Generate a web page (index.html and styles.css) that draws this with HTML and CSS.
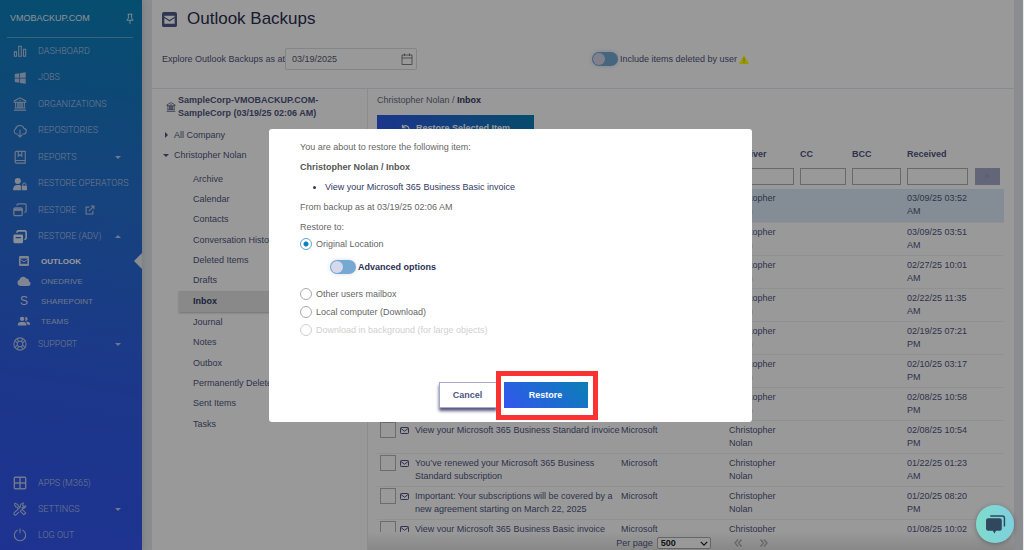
FILE: index.html
```html
<!DOCTYPE html>
<html lang="en">
<head>
<meta charset="utf-8">
<title>Outlook Backups</title>
<link rel="stylesheet" href="styles.css">
</head>
<body>
<svg class="defs" aria-hidden="true">
  <symbol id="bank" viewBox="0 0 16 16"><path d="M1.500 6V4.500L8 1l6.500 3.500V6zM3 6v6.500M5.500 6v6.500M10.500 6v6.500M13 6v6.500M7 6v6.500M9 6v6.500M2 12.500h12M1 15h14" fill="none" stroke="currentColor" stroke-width="1.200"/><circle cx="8" cy="4" r=".8" fill="currentColor"/></symbol>
  <symbol id="mail" viewBox="0 0 16 16"><path fill="currentColor" fill-rule="evenodd" d="M2 0h12a2 2 0 0 1 2 2v12a2 2 0 0 1-2 2H2a2 2 0 0 1-2-2V2a2 2 0 0 1 2-2zM2.500 6.500v6h11v-6L8 10zM2.500 4v1L8 8.500 13.500 5V4z"/></symbol>
  <symbol id="envelope" viewBox="0 0 18 14"><rect x="1" y="1" width="16" height="12" rx="1.500" fill="none" stroke="currentColor" stroke-width="2"/><path d="M2 3l7 5.500L16 3" fill="none" stroke="currentColor" stroke-width="2"/></symbol>
</svg>
<div class="app">
  <nav class="sidebar">
    <div class="brand"><span>VMOBACKUP.COM</span>
      <svg class="pin" viewBox="0 0 10 14"><path d="M2 1h6M3 1v5L1 8.500h8L7 6V1M5 8.500V13" fill="none" stroke="currentColor" stroke-width="1.100"/></svg>
    </div>
    <ul class="menu menu-main">
      <li><a href="#"><svg class="ico" viewBox="0 0 16 16"><path d="M1.500 9h2.500v5H1.500zM6.500 2.500H9.500V14h-3zM12 6h2.500v8H12z" fill="none" stroke="currentColor" stroke-width="1.200"/></svg><span>DASHBOARD</span></a></li>
      <li><a href="#"><svg class="ico" viewBox="0 0 16 16"><path fill="currentColor" d="M2 3.500l5-.8v5H2zM7.800 2.600L14.500 1.500v6.200H7.800zM2 8.500h5v5l-5-.8zM7.800 8.500h6.700v6.200l-6.700-1.100z"/></svg><span>JOBS</span></a></li>
      <li><a href="#"><svg class="ico"><use href="#bank"/></svg><span>ORGANIZATIONS</span></a></li>
      <li><a href="#"><svg class="ico" viewBox="0 0 16 16"><path d="M5.500 11.500H4A3.200 3.200 0 0 1 3 5.500 5 5 0 0 1 12.500 5 3.300 3.300 0 0 1 12.500 11.500H10.500M8 6.500V14.500M5.500 12.300L8 14.800l2.500-2.500" fill="none" stroke="currentColor" stroke-width="1.200"/></svg><span>REPOSITORIES</span></a></li>
      <li><a href="#"><svg class="ico" viewBox="0 0 16 16"><path d="M14 12V1.500H4A1.500 1.500 0 0 0 2.500 3v10.500A1.500 1.500 0 0 0 4 15h10v-3H4a1.500 1.500 0 0 0-1.500 1.500M6 1.500V7l2-1.500L10 7V1.500" fill="none" stroke="currentColor" stroke-width="1.300"/></svg><span>REPORTS</span><i class="caret"></i></a></li>
      <li><a href="#"><svg class="ico people" viewBox="0 0 16 16"><circle cx="5.500" cy="4.500" r="3.500" fill="currentColor"/><path fill="currentColor" d="M0 15c0-4 2-6 5-6h3l1 1v5z"/><rect x="10" y="10" width="6" height="5" rx=".6" fill="currentColor"/><path d="M11.300 10V8.500a1.700 1.700 0 0 1 3.400 0V10" fill="none" stroke="currentColor" stroke-width="1.100"/></svg><span>RESTORE OPERATORS</span></a></li>
      <li><a href="#"><svg class="ico" viewBox="0 0 16 16"><rect x="1" y="5.500" width="9.500" height="9" rx="1.500" fill="none" stroke="currentColor" stroke-width="1.400"/><path d="M1 6h10v3H1z" fill="currentColor"/><path d="M4.500 3V2.500A1.500 1.500 0 0 1 6 1h7.500A1.500 1.500 0 0 1 15 2.500V9a1.500 1.500 0 0 1-1.500 1.500H13" fill="none" stroke="currentColor" stroke-width="1.400"/></svg><span>RESTORE</span><svg class="ext" viewBox="0 0 14 14"><path d="M6 3H1.500v9.500H11V8M8 1.500h4.500V6M12.500 1.500L5.500 8.500" fill="none" stroke="currentColor" stroke-width="1.500"/></svg></a></li>
      <li><a href="#"><svg class="ico bright" viewBox="0 0 16 16"><path fill="currentColor" fill-rule="evenodd" d="M2 5h8a1.500 1.500 0 0 1 1.500 1.500v7A1.500 1.500 0 0 1 10 15H2A1.500 1.500 0 0 1 .5 13.500v-7A1.500 1.500 0 0 1 2 5zM3 8v1.500h6V8z"/><path d="M4.500 3V2.500A1.500 1.500 0 0 1 6 1h7.500A1.500 1.500 0 0 1 15 2.500V9a1.500 1.500 0 0 1-1.500 1.500H13" fill="none" stroke="currentColor" stroke-width="1.800"/></svg><span>RESTORE (ADV)</span><i class="caret up"></i></a></li>
    </ul>
    <ul class="menu menu-sub">
      <li class="active"><a href="#"><svg class="sub"><use href="#mail"/></svg><span>OUTLOOK</span></a></li>
      <li><a href="#"><svg class="sub wide" viewBox="0 0 20 14"><path fill="currentColor" d="M5 14a4.500 4.500 0 0 1-1.500-8.700A5.500 5.500 0 0 1 13.500 3.500 3.500 3.500 0 0 1 17 7.200 3.500 3.500 0 0 1 16.500 14z"/></svg><span>ONEDRIVE</span></a></li>
      <li><a href="#"><b class="sub letter">S</b><span>SHAREPOINT</span></a></li>
      <li><a href="#"><svg class="sub wide" viewBox="0 0 20 16"><circle cx="7" cy="4.500" r="3.500" fill="currentColor"/><path fill="currentColor" d="M0 15c0-4 2-5.500 4.500-5.500h5C12 9.500 14 11 14 15zM11.500 7.200a4.500 4.500 0 0 0 0-5.400 3 3 0 1 1 0 5.400zM12.500 9H15c3 0 5 1.500 5 5h-4.700c-.2-2.500-1.300-4-2.800-5z"/></svg><span>TEAMS</span></a></li>
    </ul>
    <ul class="menu">
      <li><a href="#"><svg class="ico" viewBox="0 0 16 16"><g fill="none" stroke="currentColor" stroke-width="1.200"><circle cx="8" cy="8" r="7"/><circle cx="8" cy="8" r="3.200"/><path d="M2.500 4.500L5 6.800M4.500 2.500L6.800 5M11.500 2.500L9.200 5M13.500 4.500L11 6.800M2.500 11.500L5 9.200M4.500 13.500L6.800 11M11.500 13.500L9.200 11M13.500 11.500L11 9.200"/></g></svg><span>SUPPORT</span><i class="caret"></i></a></li>
    </ul>
    <ul class="menu menu-foot">
      <li><a href="#"><svg class="ico" viewBox="0 0 16 16"><path d="M2.500 1.500h11a1 1 0 0 1 1 1v11a1 1 0 0 1-1 1h-11a1 1 0 0 1-1-1v-11a1 1 0 0 1 1-1zM8 1.500v13M1.500 8h13" fill="none" stroke="currentColor" stroke-width="1.600"/></svg><span>APPS (M365)</span></a></li>
      <li><a href="#"><svg class="ico" viewBox="0 0 16 16"><g fill="none" stroke="currentColor" stroke-width="1.200"><path d="M1.500 2.500l1-1 3 1.500.5 1.500 2 2M9.500 9l1-.5 4 4-2 2.200-4-4 .5-1zM10 6.500L14.500 4.500 12.500 5 11 3.500 11.800 1.200A3.500 3.500 0 0 0 8.500 5.500L1.500 12.200a1.600 1.600 0 0 0 2.300 2.300L7 11.300M10 6.500l1 .8a3.500 3.500 0 0 0 3.700-3M1.500 2.500L3 5.500l1.500.5 2 2"/></g></svg><span>SETTINGS</span><i class="caret"></i></a></li>
      <li><a href="#"><svg class="ico" viewBox="0 0 16 16"><path d="M5.200 2.200a6.500 6.500 0 1 0 5.600 0M8 .5v5.500" fill="none" stroke="currentColor" stroke-width="1.200"/></svg><span>LOG OUT</span></a></li>
    </ul>
  </nav>

  <main class="main">
    <header class="title"><svg><use href="#mail"/></svg><h1>Outlook Backups</h1></header>
    <div class="toolbar">
      <label for="asat">Explore Outlook Backups as at</label>
      <span class="datebox"><input id="asat" type="text" value="03/19/2025"><svg viewBox="0 0 12 12"><path d="M1 2h10v9.500H1zM1 5h10M3.500 .5V3M8.500 .5V3" fill="none" stroke="currentColor" stroke-width=".8"/></svg></span>
      <label class="switch-label include"><input class="switch" type="checkbox">Include items deleted by user
        <svg class="warn" viewBox="0 0 12 11"><path fill="#ffff00" d="M6 0l6 11H0z"/><path d="M6 3.500v4M6 8.500v1.300" stroke="#a9a96a" stroke-width="1.200"/></svg></label>
    </div>
    <div class="columns">
      <aside class="tree">
        <div class="root"><svg><use href="#bank"/></svg><b>SampleCorp-VMOBACKUP.COM-SampleCorp (03/19/25 02:06 AM)</b></div>
        <div class="node"><i class="caret right"></i>All Company</div>
        <div class="node"><i class="caret"></i>Christopher Nolan</div>
        <ul>
          <li>Archive</li><li>Calendar</li><li>Contacts</li><li>Conversation History</li><li>Deleted Items</li><li>Drafts</li><li class="selected">Inbox</li><li>Journal</li><li>Notes</li><li>Outbox</li><li>Permanently Deleted</li><li>Sent Items</li><li>Tasks</li>
        </ul>
      </aside>
      <section class="content">
        <div class="crumb">Christopher Nolan / <b>Inbox</b></div>
        <button class="primary restore-selected" type="button"><svg viewBox="0 0 12 12"><path d="M2 1v4h4M2 5a4.500 4.500 0 1 1 1 5" fill="none" stroke="currentColor" stroke-width="1.600"/></svg>Restore Selected Item</button>
        <div class="list">
          <table>
            <colgroup><col class="c-check"><col class="c-icon"><col><col class="c-sender"><col class="c-receiver"><col class="c-cc"><col class="c-bcc"><col class="c-received"><col class="c-clear"></colgroup>
            <thead>
              <tr><th></th><th></th><th>Subject</th><th>Sender</th><th>Receiver</th><th>CC</th><th>BCC</th><th>Received</th><th></th></tr>
              <tr class="filters"><td></td><td></td><td><input type="text" aria-label="Subject"></td><td><input type="text" aria-label="Sender"></td><td><input type="text" aria-label="Receiver"></td><td><input type="text" aria-label="CC"></td><td><input type="text" aria-label="BCC"></td><td><input type="text" aria-label="Received"></td><td><button class="clear" type="button">×</button></td></tr>
            </thead>
            <tbody>
              <tr class="picked"><td><input type="checkbox" aria-label="Select" checked></td><td><svg><use href="#envelope"/></svg></td><td>View your Microsoft 365 Business Basic invoice</td><td>Microsoft</td><td>Christopher Nolan</td><td></td><td></td><td>03/09/25 03:52 AM</td><td></td></tr>
              <tr><td><input type="checkbox" aria-label="Select"></td><td><svg><use href="#envelope"/></svg></td><td></td><td>Microsoft</td><td>Christopher Nolan</td><td></td><td></td><td>03/09/25 03:51 AM</td><td></td></tr>
              <tr><td><input type="checkbox" aria-label="Select"></td><td><svg><use href="#envelope"/></svg></td><td></td><td>Microsoft</td><td>Christopher Nolan</td><td></td><td></td><td>02/27/25 10:01 AM</td><td></td></tr>
              <tr><td><input type="checkbox" aria-label="Select"></td><td><svg><use href="#envelope"/></svg></td><td></td><td>Microsoft</td><td>Christopher Nolan</td><td></td><td></td><td>02/22/25 11:35 AM</td><td></td></tr>
              <tr><td><input type="checkbox" aria-label="Select"></td><td><svg><use href="#envelope"/></svg></td><td></td><td>Microsoft</td><td>Christopher Nolan</td><td></td><td></td><td>02/19/25 07:21 PM</td><td></td></tr>
              <tr><td><input type="checkbox" aria-label="Select"></td><td><svg><use href="#envelope"/></svg></td><td></td><td>Microsoft</td><td>Christopher Nolan</td><td></td><td></td><td>02/10/25 03:17 PM</td><td></td></tr>
              <tr><td><input type="checkbox" aria-label="Select"></td><td><svg><use href="#envelope"/></svg></td><td></td><td>Microsoft</td><td>Christopher Nolan</td><td></td><td></td><td>02/08/25 10:58 PM</td><td></td></tr>
              <tr><td><input type="checkbox" aria-label="Select"></td><td><svg><use href="#envelope"/></svg></td><td>View your Microsoft 365 Business Standard invoice</td><td>Microsoft</td><td>Christopher Nolan</td><td></td><td></td><td>02/08/25 10:54 PM</td><td></td></tr>
              <tr><td><input type="checkbox" aria-label="Select"></td><td><svg><use href="#envelope"/></svg></td><td>You’ve renewed your Microsoft 365 Business Standard subscription</td><td>Microsoft</td><td>Christopher Nolan</td><td></td><td></td><td>01/22/25 01:23 AM</td><td></td></tr>
              <tr><td><input type="checkbox" aria-label="Select"></td><td><svg><use href="#envelope"/></svg></td><td>Important: Your subscriptions will be covered by a new agreement starting on March 22, 2025</td><td>Microsoft</td><td>Christopher Nolan</td><td></td><td></td><td>01/20/25 08:20 PM</td><td></td></tr>
              <tr><td><input type="checkbox" aria-label="Select"></td><td><svg><use href="#envelope"/></svg></td><td>View your Microsoft 365 Business Basic invoice</td><td>Microsoft</td><td>Christopher</td><td></td><td></td><td>01/08/25 10:02</td><td></td></tr>
            </tbody>
          </table>
        </div>
        <div class="pager">
          <label for="per">Per page</label>
          <span class="selectbox"><select id="per"><option>500</option></select><svg viewBox="0 0 10 6"><path d="M1 1l4 4 4-4" fill="none" stroke="#222" stroke-width="1.600"/></svg></span>
          <svg class="page" viewBox="0 0 8 8"><path d="M4 .5L1 4l3 3.500M7.500 .5l-3 3.500 3 3.500" fill="none" stroke="currentColor" stroke-width="1.300"/></svg>
          <svg class="page" viewBox="0 0 8 8"><path d="M.5 .5l3 3.500-3 3.500M4 .5L7 4 4 7.500" fill="none" stroke="currentColor" stroke-width="1.300"/></svg>
        </div>
      </section>
    </div>
  </main>
</div>

<div class="overlay">
  <form class="dialog" role="dialog" aria-label="Restore item">
    <p>You are about to restore the following item:</p>
    <p><b>Christopher Nolan / Inbox</b></p>
    <ul><li>View your Microsoft 365 Business Basic invoice</li></ul>
    <p>From backup as at 03/19/25 02:06 AM</p>
    <p class="to">Restore to:</p>
    <label class="option"><input type="radio" name="to" checked>Original Location</label>
    <label class="switch-label advanced"><input class="switch" type="checkbox">Advanced options</label>
    <label class="option"><input type="radio" name="to">Other users mailbox</label>
    <label class="option"><input type="radio" name="to">Local computer (Download)</label>
    <label class="option off"><input type="radio" name="to" disabled>Download in background (for large objects)</label>
    <div class="actions"><button class="cancel" type="button">Cancel</button><span class="marked"><button class="primary" type="button">Restore</button></span></div>
  </form>
</div>
<button class="chat" type="button" aria-label="Chat"><svg viewBox="0 0 20 20"><path fill="#30475e" d="M3 4h11a2 2 0 0 1 2 2v8a2 2 0 0 1-2 2h-3.500L9 18.500 7.500 16H3a2 2 0 0 1-2-2V6a2 2 0 0 1 2-2z"/><path d="M5 1.800h11.500a2 2 0 0 1 2 2V12" fill="none" stroke="#30475e" stroke-width="1.400"/></svg></button>
</body>
</html>
```

FILE: styles.css
```css
* { box-sizing: border-box; }
body {
  margin: 0;
  height: 100vh;
  overflow: hidden;
  background: #fff;
  color: #4f5680;
  font: 9px/13px "Liberation Sans", Arial, sans-serif;
}
ul { list-style: none; margin: 0; padding: 0; }
p { margin: 0; }
a { color: inherit; text-decoration: none; }
button, input, select { font: inherit; color: inherit; margin: 0; }
svg { display: block; flex: none; }
.defs { position: absolute; width: 0; height: 0; }

.app { display: flex; height: 100vh; padding-right: 10px; background: #e8e9ef; }

/* sidebar */
.sidebar {
  display: flex;
  flex-direction: column;
  flex: none;
  width: 142px;
  background: linear-gradient(190deg, #0982b8 0%, #2570d0 35%, #305ce8 70%, #3256f2 100%);
  box-shadow: 0 0 8px #c4c6ce;
  color: #b9c8e8;
}
.brand {
  display: flex;
  justify-content: space-between;
  align-items: center;
  height: 38px;
  margin: 0 9px 0 7px;
  padding-left: 3px;
  border-bottom: 1px solid #5fa6d0;
  color: #e6eef8;
}
.pin { width: 8px; height: 12px; margin-right: -1px; }
.menu a { display: flex; align-items: center; height: 26px; padding-left: 13px; font-family: Roboto, sans-serif; font-weight: 300; }
.menu-main { display: flex; flex-direction: column; justify-content: space-between; height: 212px; }
.ico { width: 14px; height: 14px; margin-right: 11px; }
.people { color: #d5def0; }
.bright { color: #e6eef8; }
.ext { width: 10px; height: 10px; margin-left: 9px; }
.menu .caret { margin-left: auto; margin-right: 21px; }
.caret { border: 3px solid transparent; border-top-color: currentColor; border-bottom: 0; }
.caret.up { border-top: 0; border-bottom: 3px solid currentColor; }
.caret.right { margin: 0 1px 0 2px; border: 3px solid transparent; border-left-color: currentColor; border-right: 0; }
.menu-sub { padding: 1px 0 0; }
.menu-sub li { position: relative; }
.menu-sub a { height: 20px; padding-left: 17px; font-family: inherit; font-size: 8px; }
.sub { width: 10px; height: 10px; margin: 0 12px 0 2px; color: #d5def0; }
.sub.wide { width: 14px; margin: 0 10px 0 0; }
.letter { font-size: 12px; line-height: 10px; text-align: center; font-weight: 400; }
.menu-sub .active { color: #fff; }
.menu-sub .active a { font-weight: 700; }
.active::after {
  content: "";
  position: absolute;
  right: 0;
  top: 2px;
  border: 8px solid transparent;
  border-right-color: #e8e9ef;
  border-left: 0;
}
.menu-foot { margin-top: auto; padding-bottom: 2px; }

/* main */
.main { display: flex; flex-direction: column; flex: 1; min-width: 0; margin-left: 10px; background: #fff; }
.title { display: flex; align-items: center; gap: 10px; height: 38px; padding-left: 10px; color: #4f5a88; }
.title svg { width: 15px; height: 15px; }
h1 { margin: 0; font-size: 17px; font-weight: 400; line-height: 20px; color: #2a2d50; }
.toolbar {
  display: flex;
  align-items: center;
  height: 51px;
  padding: 0 0 8px 10px;
  border-bottom: 1px solid #e4e6ee;
}
.toolbar > label:first-child { width: 123px; white-space: nowrap; }
.datebox { position: relative; width: 132px; }
.datebox input { width: 100%; height: 22px; padding: 0 6px; border: 1px solid #dcdce4; border-radius: 2px; background: #fff; color: #555a70; }
.datebox svg { position: absolute; right: 4px; top: 5px; width: 12px; height: 12px; color: #666; }
.switch-label { display: flex; align-items: center; gap: 2px; }
.include { margin-left: 175px; }
.warn { width: 10px; height: 9px; }
.switch {
  appearance: none;
  width: 26px;
  height: 14px;
  padding: 1px;
  border-radius: 7px;
  background: #75a9d2;
  box-shadow: 0 0 5px #d4dcec;
}
.switch::before { content: ""; display: block; width: 12px; height: 12px; border-radius: 6px; background: #d6d8ec; }
.columns { display: flex; flex: 1; min-height: 0; }

/* folder tree */
.tree { width: 216px; flex: none; border-right: 1px solid #eaeaf0; padding: 5px 0 0 10px; }
.root { display: flex; align-items: center; gap: 2px; width: 158px; padding-left: 4px; margin-bottom: 5px; }
.root svg { width: 10px; height: 10px; }
.node { display: flex; align-items: center; height: 20px; gap: 5px; padding-left: 1px; }
.tree ul { padding: 4px 0 0 17px; }
.tree li { height: 20px; padding-left: 14px; line-height: 20px; }
.tree li:nth-child(3n) { margin-bottom: 1px; }
.tree li.selected { height: 21px; background: #e4e4e4; box-shadow: 0 1px 2px #bbb; font-weight: 700; color: #333863; }

/* message list */
.content { display: flex; flex-direction: column; flex: 1; min-width: 0; padding: 5px 10px 0 9px; }
.crumb { color: #666b85; }
.crumb b { color: #333863; }
.primary {
  display: flex;
  align-items: center;
  justify-content: center;
  gap: 6px;
  height: 26px;
  border: 0;
  background: linear-gradient(40deg, #3355f0, #0a80b4);
  color: #fff;
  font-weight: 700;
}
.restore-selected { width: 157px; flex: none; margin-top: 8px; }
.restore-selected svg { width: 9px; height: 9px; }
.list { flex: 1; min-height: 0; overflow: hidden; margin-top: 4px; }
table { width: 100%; border-collapse: collapse; table-layout: fixed; }
.c-check { width: 23px; }
.c-icon { width: 15px; }
.c-sender { width: 108px; }
.c-receiver { width: 71px; }
.c-cc { width: 52px; }
.c-bcc { width: 55px; }
.c-received { width: 67px; }
.c-clear { width: 30px; }
th { height: 18px; padding: 0; text-align: left; }
.filters td { height: 26px; padding: 0 6px 0 0; vertical-align: middle; }
.filters input { display: block; width: 100%; height: 17px; border: 1px solid #b0b0b0; background: #fff; }
.filters td:last-child { padding: 0 4px 0 1px; }
.clear { display: block; width: 100%; height: 17px; border: 0; padding: 0; background: #a3abc9; color: #999; }
tbody tr { border-bottom: 1px solid #f2f2f5; }
tbody td { height: 33px; padding: 3px 0; vertical-align: top; }
tbody td:nth-child(8) { padding-right: 6px; }
.picked { background: #dcecf9; }
tbody input {
  appearance: none;
  display: block;
  width: 16px;
  height: 16px;
  margin: -2px 0 0 3px;
  border: 1px solid #b5b5b5;
  background: #fff;
}
tbody svg { width: 9px; height: 7px; margin-top: 3px; }
.pager {
  display: flex;
  align-items: center;
  justify-content: center;
  height: 18px;
  padding: 4px 0 0 20px;
  margin: 0 -10px 0 -9px;
  background: linear-gradient(#fff, #e2e2e2);
}
.selectbox { position: relative; margin: 0 23px 0 4px; }
select { appearance: none; display: block; width: 54px; height: 12px; padding: 0 3px; border: 1px solid #aaa; border-radius: 2px; background: #fff; color: #222; line-height: 10px; font-weight: 700; }
.selectbox svg { position: absolute; right: 3px; top: 4px; width: 8px; height: 5px; }
.page { width: 8px; height: 8px; margin-right: 18px; color: #aaa; }

/* dialog */
.overlay {
  position: fixed;
  inset: 0 1px 0 0;
  display: grid;
  place-items: center;
  padding: 1px 2px 0 0;
  background: rgba(0, 0, 0, .4);
}
.dialog {
  display: flex;
  flex-direction: column;
  width: 483px;
  max-width: 100%;
  padding: 12px 31px 14px;
  border-radius: 3px;
  background: #fff;
  color: #666;
}
.dialog p, .dialog li { margin-bottom: 7px; }
.dialog p b { color: #555; }
.dialog ul { padding-left: 25px; list-style: disc; color: #333863; }
.dialog .to { margin-bottom: 1px; }
.option { display: flex; align-items: center; gap: 4px; height: 18px; }
.option input { appearance: none; width: 12px; height: 12px; border: 1px solid #aaa; border-radius: 50%; }
.option input:checked { border-color: #5aa4d2; background: radial-gradient(circle, #0f80bd 0 2px, #fff 3px); }
.option.off { color: #d0d0d0; }
.option.off input { border-color: #d0d0d0; }
.advanced { margin: 7px 0 11px 30px; color: #2b2f55; font-weight: 700; }
.actions { display: flex; justify-content: center; align-items: center; gap: 7px; margin: 43px 0 0 5px; }
.actions button { height: 26px; }
.cancel { width: 58px; border: 1px solid #a3abc9; background: #fff; color: #4f5680; font-weight: 700; box-shadow: 0 3px 3px #5a5580; }
.marked { position: relative; }
.marked .primary { width: 84px; }
.marked::after { content: ""; position: absolute; inset: -11px -10px -12px -8px; border: 5px solid #fb3232; pointer-events: none; }
.chat {
  position: fixed;
  right: 10px;
  bottom: 7px;
  display: grid;
  place-items: center;
  width: 38px;
  height: 38px;
  padding: 0;
  border: 0;
  border-radius: 50%;
  background: linear-gradient(90deg, #7fdccb, #7ecfe0);
  box-shadow: 0 1px 5px rgba(0, 0, 0, .3);
}
.chat svg { width: 21px; height: 21px; }
```
